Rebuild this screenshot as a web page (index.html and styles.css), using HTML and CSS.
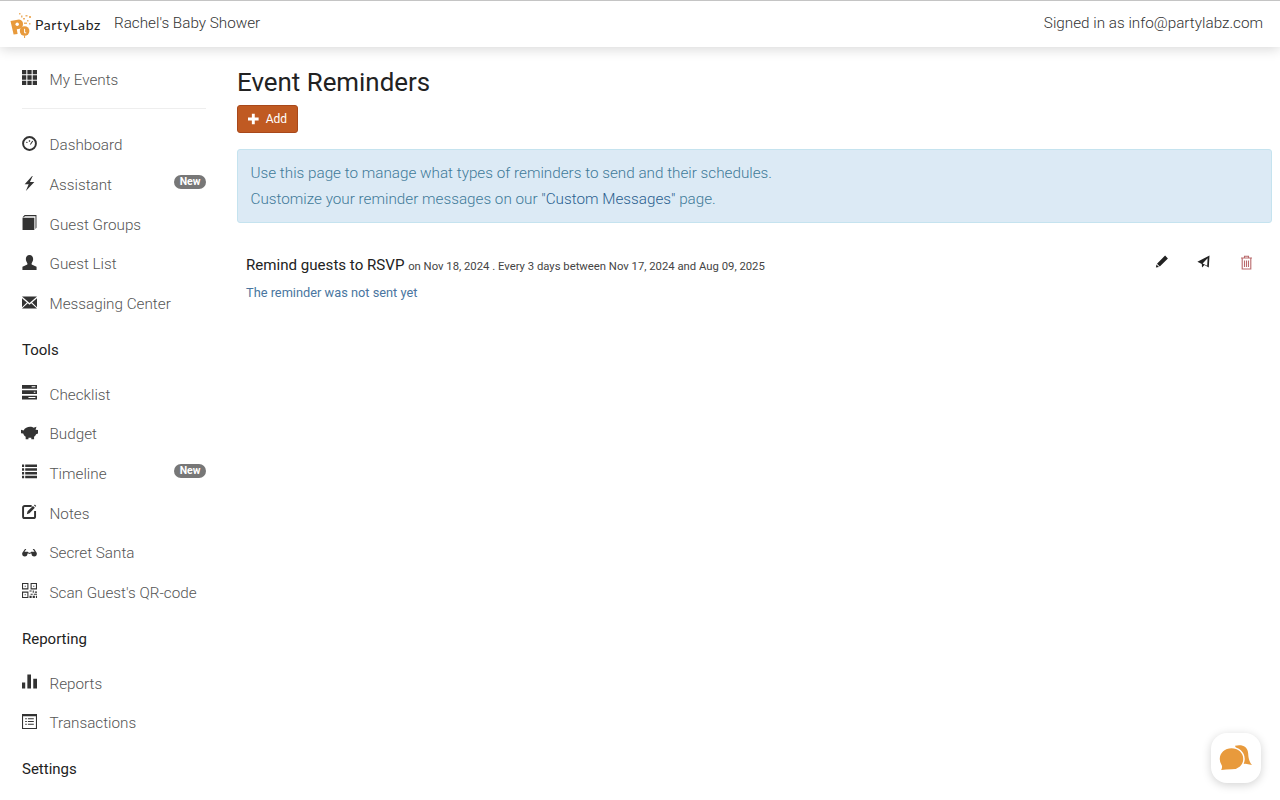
FILE: index.html
```html
<!DOCTYPE html>
<html lang="en">
<head>
  <meta charset="UTF-8">
  <title>Event Reminders</title>
  <link rel="stylesheet" href="styles.css">
</head>
<body>
  <!-- Top bar -->
  <header class="topbar">
    <div class="brand">
      <svg class="brand-mark" width="22" height="26" viewBox="0 0 22 26">
        <path d="M.5 9 L9 7.500 Q13 8 13 12 Q13 16.500 8.500 17 L6.800 17.300 L7.600 22 L3.600 22.600 Z" fill="#e89a3c"/>
        <circle cx="7.200" cy="12.300" r="1.700" fill="#fff"/>
        <circle cx="14.600" cy="19" r="4.800" fill="#e89a3c"/>
        <path d="M14.600 23.500 V26" stroke="#e89a3c" stroke-width="1"/>
        <path d="M14.600 16.800 V20.800 H16.200" stroke="#fff" stroke-width="1" fill="none"/>
        <g fill="#eeb26a">
          <rect x="9" y="1" width="1.500" height="1.500"/>
          <rect x="11" y="3.500" width="1.500" height="2"/>
          <rect x="13" y="6" width="2" height="1.500"/>
          <rect x="15.500" y="3" width="2" height="1.500"/>
          <rect x="19" y="4" width="2" height="2"/>
          <rect x="17" y="8" width="1.500" height="1.500"/>
          <rect x="14" y="10.500" width="3" height="1.500"/>
          <rect x="19" y="11" width="1.500" height="1.500"/>
        </g>
      </svg>
      <span class="brand-name">PartyLabz</span>
      <span class="event-name">Rachel's Baby Shower</span>
    </div>
    <div class="signed-in">Signed in as info@partylabz.com</div>
  </header>

  <div class="layout">
    <!-- Sidebar -->
    <nav class="sidebar">
      <a class="nav-item top-item">
        <svg class="icon" viewBox="0 0 14 14"><path d="M0 0h4v4H0zM5 0h4v4H5zM10 0h4v4h-4zM0 5h4v4H0zM5 5h4v4H5zM10 5h4v4h-4zM0 10h4v4H0zM5 10h4v4H5zM10 10h4v4h-4z"/></svg>
        My Events
      </a>
      <hr class="nav-rule">

      <a class="nav-item">
        <svg class="icon" viewBox="0 0 14 14"><circle cx="7" cy="7" r="6" fill="none" stroke="#333" stroke-width="1.800"/><path d="M3.600 6.400 4.600 5.200 5.400 6.600zM6.400 4h1.200v1.400H6.400zM7.400 7.600 9.600 4.400l.8.5-2.200 3.200z"/></svg>
        Dashboard
      </a>
      <a class="nav-item">
        <svg class="icon" viewBox="0 0 14 14"><path d="M9.400 0 2.500 7.800h3.700L3.600 14 11.500 5.600H7.400L10 0z"/></svg>
        Assistant
        <span class="badge">New</span>
      </a>
      <a class="nav-item">
        <svg class="icon" viewBox="0 0 14 14"><path d="M.5 2 2.500 0H13.500V12L12.600 13V1.200H2.800L1.800 2.200zM.5 2.500h11V14H.5z"/></svg>
        Guest Groups
      </a>
      <a class="nav-item">
        <svg class="icon" viewBox="0 0 14 14"><path d="M7 0c2.200 0 3.400 1.600 3.400 3.800 0 1.600-.7 3-1.400 3.800v1.200L13.600 11v3H.4v-3L5 8.800V7.600C4.300 6.800 3.600 5.400 3.600 3.800 3.600 1.600 4.800 0 7 0z"/></svg>
        Guest List
      </a>
      <a class="nav-item">
        <svg class="icon" viewBox="0 0 14 14"><path d="M0 1.500h14L7 7.400zM0 3v8.500L4.600 6.900zM14 3v8.500L9.400 6.900zM5.400 7.600 7 9l1.600-1.400 5.400 5H0z"/></svg>
        Messaging Center
      </a>

      <div class="nav-heading">Tools</div>
      <a class="nav-item">
        <svg class="icon" viewBox="0 0 14 14"><path d="M0 0h14v3.500H0zM0 5h14v3.500H0zM0 10h14v3.500H0z"/><path d="M9 1.200h3.500v1H9zM11 6.200h1.500v1H11zM6 11.200h6.500v1H6z" fill="#fff"/></svg>
        Checklist
      </a>
      <a class="nav-item">
        <svg class="icon icon-wide" viewBox="0 0 16 14"><path d="M0 4.500 2.400 5C3.600 2.800 6 1.600 8.600 1.600c1.400 0 2.400.3 3.200.9L14.600 1.600 13.700 4.300 16 4.600V8l-1.800.6c-.4 1-1.100 1.800-1.900 2.400V13.400H9.700V12H7V13.400H4.400V11C3 10.100 2.400 9.100 2.100 8L0 7.700z"/></svg>
        Budget
      </a>
      <a class="nav-item">
        <svg class="icon" viewBox="0 0 14 14"><path d="M0 .5h2v2.400H0zM3 .5h11v2.400H3zM0 4h2v2.400H0zM3 4h11v2.400H3zM0 7.500h2v2.400H0zM3 7.500h11v2.400H3zM0 11h2v2.400H0zM3 11h11v2.400H3z"/></svg>
        Timeline
        <span class="badge">New</span>
      </a>
      <a class="nav-item">
        <svg class="icon" viewBox="0 0 14 14"><path d="M9 1.900H2.500a1.500 1.500 0 0 0-1.500 1.500v8.200a1.500 1.500 0 0 0 1.500 1.500h8.200a1.500 1.500 0 0 0 1.500-1.500V6.500" fill="none" stroke="#333" stroke-width="1.800"/><path d="M4.500 9.500 5.200 6.800 10.200 1.800 12 3.600 7 8.600zM12 .5l1.300 1.300-.8.800-1.300-1.300z"/></svg>
        Notes
      </a>
      <a class="nav-item">
        <svg class="icon" viewBox="0 0 16 14"><path d="M.2 8.500 3.200 4.200h1.400L2.600 7.200h3.600l1 1h1.600l1-1h3.600l-2-3H13L15.800 8.500v1a2.800 2.800 0 0 1-5.600 0V9H9.100L8 9.600 6.900 9H5.800v.5a2.800 2.800 0 0 1-5.600 0z"/></svg>
        Secret Santa
      </a>
      <a class="nav-item">
        <svg class="icon" viewBox="0 0 14 14"><path fill-rule="evenodd" d="M0 0h6v6H0zM1 1v4h4V1zM8 0h6v6H8zM9 1v4h4V1zM0 8h6v6H0zM1 9v4h4V9z"/><path d="M2.500 2.500h1v1h-1zM10.500 2.500h1v1h-1zM2.500 10.500h1v1h-1zM7 7h2v1H7zM10 7h1v2h-1zM12 8h2v1h-2zM8 10h2v1H8zM11 10h3v1h-3zM7 12h2v2H7zM10 12h2v2h-2zM13 12h1v2h-1z"/></svg>
        Scan Guest's QR-code
      </a>

      <div class="nav-heading">Reporting</div>
      <a class="nav-item">
        <svg class="icon" viewBox="0 0 14 14"><path d="M0 8h3v5.500H0zM5 .5h3.400v13H5zM10.500 4.500H14v9h-3.500z"/></svg>
        Reports
      </a>
      <a class="nav-item">
        <svg class="icon" viewBox="0 0 14 14"><path fill-rule="evenodd" d="M0 0h14v14H0zM1 2v11h12V2z"/><path d="M3 4h1.500v1H3zM5.500 4H11v1H5.500zM3 6.500h1.500v1H3zM5.500 6.500H11v1H5.500zM3 9h1.500v1H3zM5.500 9H11v1H5.500z"/></svg>
        Transactions
      </a>

      <div class="nav-heading">Settings</div>
    </nav>

    <!-- Main content -->
    <main class="content">
      <h1 class="page-title">Event Reminders</h1>
      <button class="btn-add">
        <svg width="12" height="12" viewBox="0 0 11 11"><path d="M4 0h3v4h4v3H7v4H4V7H0V4h4z" fill="#fff"/></svg>
        Add
      </button>

      <div class="alert">
        <p>Use this page to manage what types of reminders to send and their schedules.</p>
        <p>Customize your reminder messages on our <a class="alert-link">"Custom Messages"</a> page.</p>
      </div>

      <div class="reminder">
        <div class="reminder-info">
          <div class="reminder-line">
            <span class="reminder-title">Remind guests to RSVP</span>
            <small>on Nov 18, 2024 . Every 3 days between Nov 17, 2024 and Aug 09, 2025</small>
          </div>
          <div class="reminder-status">The reminder was not sent yet</div>
        </div>
        <div class="reminder-actions">
          <svg width="13" height="13" viewBox="-1.500 0 13 13" overflow="visible"><path d="M9.600.6 12.400 3.400 4.300 11.500 1.500 8.700zM1 9.500 3.500 12 .4 12.600z" fill="#222"/></svg>
          <svg width="13" height="13" viewBox="0 0 13 13"><path fill-rule="evenodd" d="M12.500.6 11.800 12.500 7.500 9.900 5 12.400 4.800 9 .4 6.800zM10.600 3.300 5.600 8.400 10.200 10.800z" fill="#222"/></svg>
          <svg width="13" height="15" viewBox="0 0 13 15"><path d="M1 3h11M4.500 3V1.200h4V3M2.200 3.500V14h8.600V3.500M4.500 5.500v6.500M6.500 5.500v6.500M8.500 5.500v6.500" fill="none" stroke="#b96a6c" stroke-width="1.100"/></svg>
        </div>
      </div>
    </main>
  </div>

  <!-- Chat widget -->
  <div class="chat-widget">
    <svg width="34" height="26" viewBox="0 0 34 26">
      <path d="M16 .8C18 .2 20 0 22 .3c4.500.7 7 4 7.200 8.500.1 3 .8 8 3.800 11.200l-6.500-1.300-3.500.3z" fill="#e89a3c"/>
      <path d="M12.500 2.500C19.500 2.500 25 7.500 25 14s-5.500 11-12 11c-3 0-7.500.3-12.500 1 1.500-1.500 2-3.500 1.700-5C.8 19 0 16.500 0 14 0 7.500 5.500 2.500 12.500 2.500z" fill="#e89a3c" stroke="#fff" stroke-width="1.500"/>
    </svg>
  </div>
</body>
</html>
```

FILE: styles.css
```css
html, body {
  height: 100%;
}

body {
  margin: 0;
  font-family: Roboto, "Liberation Sans", sans-serif;
  font-weight: 300;
  font-size: 15.25px;
  color: #333;
  background: #fff;
  overflow: hidden;
}

.topbar {
  display: flex;
  justify-content: space-between;
  align-items: center;
  height: 44px;
  padding: 0 17px 2px 10px;
  border-top: 1px solid #c4c4c4;
  background: #fff;
  box-shadow: 0 2px 12px rgba(0,0,0,0.16);
  position: relative;
  z-index: 2;
}

.brand {
  display: flex;
  align-items: center;
}

.brand-mark {
  margin: 3px 3px 0 0;
}

.brand-name {
  font-family: Lato, sans-serif;
  font-weight: 400;
  font-size: 14px;
  letter-spacing: 0.6px;
  color: #222;
  width: 69px;
  margin-top: 2px;
}

.event-name {
  margin-left: 10px;
}

.layout {
  display: flex;
  height: 753px;
}

.sidebar {
  width: 184px;
  flex: none;
  padding: 13px 15px 0 22px;
  overflow: hidden;
}

.nav-item {
  display: flex;
  align-items: center;
  height: 39.65px;
  color: #555;
}

.icon {
  width: 15px;
  height: 15px;
  flex: none;
  margin: -4px 12.5px 0 0;
  fill: #333;
}

.icon-wide {
  width: 17px;
  margin: -4px 11.5px 0 -1px;
}

.badge {
  margin: -6px 0 0 auto;
  padding: 0 5.5px;
  height: 14px;
  line-height: 14px;
  border-radius: 8px;
  background: #777;
  color: #fff;
  font-size: 10.5px;
  font-weight: 700;
}

.nav-rule {
  border: 0;
  border-top: 1px solid #eee;
  margin: 8px 0 17px;
}

.nav-heading {
  height: 51px;
  line-height: 53px;
  color: #222;
  font-weight: 400;
  font-size: 15px;
}

.content {
  flex: 1;
  padding: 18px 8px 0 16px;
}

.page-title {
  margin: 0 0 6px;
  font-size: 25.9px;
  line-height: 34px;
  font-weight: 400;
  color: #222;
}

.btn-add {
  display: flex;
  align-items: center;
  gap: 7px;
  height: 28px;
  width: 61px;
  padding: 0 10px;
  border: 1px solid #a8481a;
  border-radius: 3px;
  background: #c05a22;
  color: #fff;
  font-family: inherit;
  font-size: 12px;
  font-weight: 400;
}

.alert {
  margin-top: 16px;
  padding: 10px 12.5px;
  height: 52px;
  border: 1px solid #c5e3ef;
  border-radius: 3px;
  background: #dceaf5;
  color: #3f7a99;
  line-height: 26px;
}

.alert p {
  margin: 0;
}

.alert-link {
  color: #2a5f8f;
}

.reminder {
  display: flex;
  justify-content: space-between;
  padding: 30px 19px 0 9px;
}

.reminder-line {
  line-height: 24px;
}

.reminder-title {
  color: #222;
  font-size: 15.1px;
  font-weight: 400;
}

.reminder-line small {
  font-size: 11.3px;
  font-weight: 400;
  color: #444;
}

.reminder-status {
  margin-top: 2px;
  font-size: 12.8px;
  line-height: 24px;
  font-weight: 400;
  color: #4a76a0;
}

.reminder-actions {
  display: flex;
  align-items: flex-start;
  gap: 30px;
  padding-top: 2px;
}

.chat-widget {
  position: fixed;
  left: 1211px;
  top: 733px;
  width: 50px;
  height: 50px;
  display: flex;
  align-items: center;
  justify-content: center;
  border-radius: 16px;
  background: #fff;
  box-shadow: 0 2px 10px rgba(0,0,0,0.18);
}
```
